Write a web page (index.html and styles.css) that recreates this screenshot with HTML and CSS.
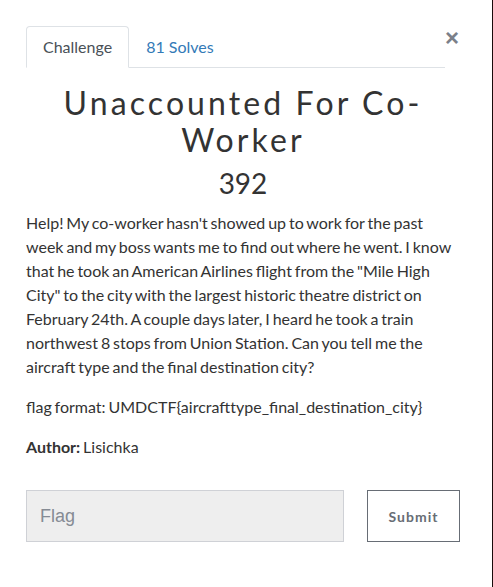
FILE: index.html
```html
<!DOCTYPE html>
<html>
<head>
<meta charset="utf-8">
<link rel="stylesheet" href="styles.css">
</head>
<body>
<div class="modal">
  <div class="head">
    <ul class="tabs">
      <li class="tab active">Challenge</li>
      <li class="tab link">81 Solves</li>
    </ul>
    <button class="close" type="button">&times;</button>
  </div>
  <h2 class="title">Unaccounted For Co-Worker</h2>
  <h3 class="points">392</h3>
  <div class="desc">
    <p>Help! My co-worker hasn't showed up to work for the past week and my boss wants me to find out where he went. I know that he took an American Airlines flight from the "Mile High City" to the city with the largest historic theatre district on February 24th. A couple days later, I heard he took a train northwest 8 stops from Union Station. Can you tell me the aircraft type and the final destination city?</p>
    <p>flag format: UMDCTF{aircrafttype_final_destination_city}</p>
    <p><strong>Author:</strong> Lisichka</p>
  </div>
  <form class="submit-row">
    <input class="flag" type="text" placeholder="Flag">
    <button class="submit" type="button">Submit</button>
  </form>
</div>
</body>
</html>
```

FILE: styles.css
```css
html, body {
  margin: 0;
  padding: 0;
  background: #fff;
}
body {
  width: 493px;
  height: 587px;
  box-sizing: border-box;
  border-right: 1px solid #1a0b0b;
  font-family: Lato, "Liberation Sans", sans-serif;
  color: #333;
}
.modal {
  padding: 26px 32px 0 26px;
}
.head {
  display: flex;
  align-items: flex-start;
}
.tabs {
  flex: 1;
  display: flex;
  list-style: none;
  margin: 0;
  padding: 0;
  border-bottom: 1px solid #dee2e6;
}
.tab {
  font-size: 16px;
  line-height: 24px;
  padding: 8px 16px;
  border: 1px solid transparent;
  border-top-left-radius: 4px;
  border-top-right-radius: 4px;
  margin-bottom: -1px;
}
.tab.active {
  color: #495057;
  border-color: #dee2e6 #dee2e6 #fff;
  background: #fff;
}
.tab.link {
  color: #337ab7;
}
.close {
  background: none;
  border: 0;
  padding: 0;
  margin: 0;
  width: 15px;
  text-align: left;
  font-family: "Liberation Sans", Arial, sans-serif;
  font-size: 24px;
  font-weight: 700;
  line-height: 24px;
  color: #7b8089;
}
.title {
  font-family: Lato, sans-serif;
  font-weight: 400;
  font-size: 32px;
  line-height: 37px;
  letter-spacing: 3.1px;
  text-align: center;
  margin: 16px 0 0;
  color: #333;
}
.points {
  font-family: Lato, sans-serif;
  font-weight: 400;
  font-size: 28px;
  line-height: 34px;
  text-align: center;
  margin: 8px 0 0;
  color: #333;
}
.desc {
  margin-top: 11px;
  font-size: 16px;
  line-height: 24px;
  word-spacing: -1.2px;
}
.desc p {
  margin: 0 0 16px;
}
.desc strong {
  font-weight: 700;
}
.submit-row {
  display: flex;
  margin-top: 31px;
}
.flag {
  flex: 0 0 318px;
  width: 318px;
  height: 52px;
  box-sizing: border-box;
  background: #eee;
  border: 1px solid #cfd1d6;
  border-radius: 0;
  padding: 0 13px;
  font-family: "Liberation Sans", Arial, sans-serif;
  font-size: 18px;
  color: #495057;
  outline: none;
}
.flag::placeholder {
  color: #858b94;
}
.submit {
  flex: 0 0 93px;
  margin-left: 23px;
  width: 93px;
  height: 52px;
  box-sizing: border-box;
  background: #fff;
  border: 1px solid #676d75;
  border-radius: 0;
  font-family: Lato, sans-serif;
  font-size: 14px;
  font-weight: 700;
  letter-spacing: 1px;
  color: #676d75;
}
```
